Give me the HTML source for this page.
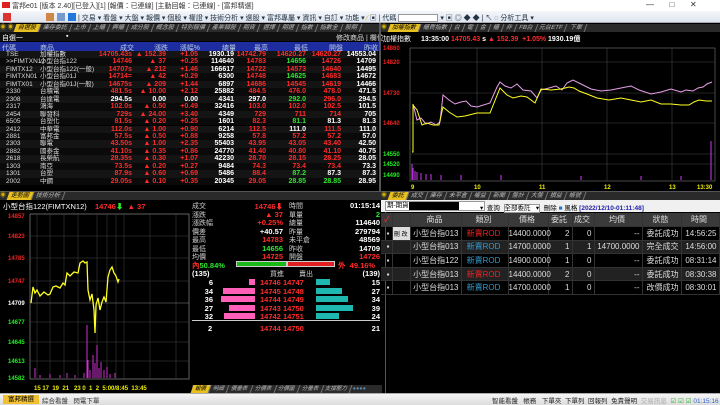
<!DOCTYPE html>
<html><head><meta charset="utf-8"><style>
*{margin:0;padding:0;box-sizing:border-box}
body{width:720px;height:405px;background:#000;overflow:hidden;position:relative;font-family:"Liberation Sans","Noto Sans CJK TC",sans-serif;font-size:7px;color:#fff}
.a{position:absolute;white-space:nowrap}
.r{color:#ff2a2a}.g{color:#2fe62f}.w{color:#fff}.y{color:#ffe800}
.tabs{background:#2a2a2a;height:8px;font-size:6px;color:#bbb;line-height:8px}
.tab{display:inline-block;padding:0 3px;border-right:1px solid #777;transform:skewX(-20deg)}
.tab.on{background:#e8c020;color:#000}
.row{position:absolute;left:0;width:378px;height:7.45px;line-height:7.45px;font-weight:bold;font-size:7px}
.row span{position:absolute;text-align:right}
.c0{left:6px;text-align:left!important;font-weight:normal;color:#ddd}
.c1{left:40px;text-align:left!important;font-weight:normal;color:#ddd}
.c2{right:246px}.c3{right:212px}.c4{right:180px}.c5{right:144px}.c6{right:112px}.c7{right:72px}.c8{right:37px}.c9{right:2px}
.ot td{border-right:1px solid #333;border-bottom:1px solid #333;height:13.6px;font-size:8px;color:#ddd;text-align:right;padding-right:2px}
</style></head><body>
<!-- title -->
<div class="a" style="left:0;top:0;width:720px;height:11px;background:#fff"></div>
<div class="a" style="left:2px;top:2px;width:8px;height:6px;background:#d22"></div>
<div class="a" style="left:12px;top:1px;color:#333;font-size:7px">富邦e01 [版本 2.40][已登入][1] [報價：已連線] [主動回報：已連線] - [富邦精選]</div>
<div class="a" style="left:646px;top:0;color:#333;font-size:8px">—&nbsp;&nbsp;&nbsp;&nbsp;&nbsp;&nbsp;&nbsp;□&nbsp;&nbsp;&nbsp;&nbsp;&nbsp;&nbsp;&nbsp;✕</div>
<div class="a" style="left:0;top:11px;width:720px;height:12px;background:linear-gradient(#f4f6fa,#dfe5ee);border-bottom:1px solid #aab"></div>
<div class="a" style="left:3px;top:13px;width:8px;height:8px;background:#d33"></div>
<div class="a" style="left:46px;top:13px;width:8px;height:8px;background:#cc8844"></div>
<div class="a" style="left:57px;top:13px;width:8px;height:8px;background:#7799cc"></div>
<div class="a" style="left:68px;top:13px;width:8px;height:8px;background:#2277dd"></div>
<div class="a" style="left:78px;top:13px;color:#234;font-size:7px">| 交易 ▾ 看盤 ▾ 大盤 ▾ 報價 ▾ 個股 ▾ 權證 ▾ 技術分析 ▾ 選股 ▾ 富邦專屬 ▾ 資訊 ▾ 自訂 ▾ 功能 ▾ <span style="color:#ca0">⁄</span> ▣ | 代碼 <span style="display:inline-block;width:40px;height:8px;background:#fff;border:1px solid #999;vertical-align:middle"></span> ▾ ▣ ◎ ◆ ◆ | ↖ ◌ 分析工具 ▾</div>
<!-- top-left panel -->
<div class="a tabs" style="left:0;top:24px;width:380px"><span style="color:#ca0">◉ ◉</span> <span class="tab on">自選股</span><span class="tab">庫存委託</span><span class="tab">上市</span><span class="tab">上櫃</span><span class="tab">興櫃</span><span class="tab">成分股</span><span class="tab">概念股</span><span class="tab">特別報價</span><span class="tab">產業類股</span><span class="tab">期貨</span><span class="tab">選擇</span><span class="tab">期選</span><span class="tab">指數</span><span class="tab">指數全</span><span class="tab">股期</span></div>
<div class="a" style="left:0;top:32px;width:380px;height:9px;background:#111"></div>
<div class="a" style="left:2px;top:33px;font-size:7px">自選一</div><div class="a" style="left:66px;top:33px">▪</div>
<div class="a" style="left:336px;top:33px;font-size:7px;color:#ddd">修改商品 | 欄位</div>
<div class="a" style="left:0;top:42px;width:380px;height:9px;background:#1d2c9e"></div>
<div class="a" style="left:0;top:43px;width:380px;color:#bcd;font-size:7px">
<span class="a" style="left:2px">代碼</span><span class="a" style="left:40px">商品</span><span class="a" style="right:246px">成交</span><span class="a" style="right:212px">漲跌</span><span class="a" style="right:180px">漲幅%</span><span class="a" style="right:144px">總量</span><span class="a" style="right:112px">最高</span><span class="a" style="right:72px">最低</span><span class="a" style="right:37px">開盤</span><span class="a" style="right:2px">昨收</span></div>
<div id="tbl"></div>
<!-- vertical divider -->
<div class="a" style="left:379px;top:23px;width:2px;height:172px;background:#555"></div>
<!-- top-right chart -->
<div class="a tabs" style="left:381px;top:24px;width:339px"><span style="color:#ca0">◉</span> <span class="tab on">加權指數</span><span class="tab">櫃買指數</span><span class="tab">台</span><span class="tab">電</span><span class="tab">金</span><span class="tab">櫃</span><span class="tab">非</span><span class="tab">FB台</span><span class="tab">元台ETF</span><span class="tab">下單</span></div>
<div class="a" style="left:383px;top:34px;font-size:7px">加權指數</div>
<div class="a" style="left:421px;top:34px;font-size:7px;font-weight:bold">13:35:00 <span class="r">14705.43</span> s <span class="r">▲ 152.39&nbsp; +1.05%</span> 1930.19億</div>
<svg class="a" style="left:381px;top:44px" width="339" height="151">
<g stroke="#444" stroke-width="0.6" fill="none">
<rect x="29" y="4" width="305" height="133" stroke="#777"/>
<line x1="96" y1="4" x2="96" y2="137"/><line x1="161" y1="4" x2="161" y2="137"/><line x1="226" y1="4" x2="226" y2="137"/><line x1="291" y1="4" x2="291" y2="137"/>
<line x1="29" y1="18" x2="334" y2="18"/><line x1="29" y1="49" x2="334" y2="49"/><line x1="29" y1="79" x2="334" y2="79"/><line x1="29" y1="110" x2="334" y2="110"/><line x1="29" y1="120" x2="334" y2="120"/>
</g>
<g font-size="6" font-weight="bold" font-family="Liberation Sans">
<text x="2" y="6" fill="#e22">14860</text><text x="2" y="20" fill="#e22">14820</text><text x="2" y="51" fill="#e22">14730</text><text x="2" y="81" fill="#e22">14640</text>
<text x="2" y="112" fill="#2e2">14550</text><text x="2" y="122" fill="#2e2">14520</text><text x="2" y="133" fill="#2e2">14490</text>
<text x="30" y="145" fill="#ee0">9</text><text x="93" y="145" fill="#ee0">10</text><text x="158" y="145" fill="#ee0">11</text><text x="223" y="145" fill="#ee0">12</text><text x="288" y="145" fill="#ee0">13</text><text x="316" y="145" fill="#ee0">13:30</text></g>
<path d="M31 120V136M32 124V136M34 127V136M36 128V136M40 129V136M45 130V136M50 130V136M60 131V136M80 131V136M120 131V136M200 132V136M260 132V136M300 132V136M330 97V136" stroke="#b030d0" stroke-width="1.2"/>
<polyline fill="none" stroke="#e8a0e8" stroke-width="1" points="32,60 36,76 40,74 45,80 50,78 55,81 59,78 62,51 68,56 74,60 80,58 85,57 90,62 96,63 109,59 116,43 119,38 124,42 130,44 136,40 142,46 150,47 156,54 160,46 168,44 175,42 181,46 186,39 192,36 200,40 210,45 220,47 230,46 240,44 250,42 258,46 270,50 280,48 290,45 300,48 305,46 312,47 317,44 322,43 326,40 331,38"/>
<polyline fill="none" stroke="#ffff20" stroke-width="1" points="31,108 32,108 32,61 36,66 41,81 46,79 52,81 58,81 62,63 68,68 76,73 84,72 96,69 109,69 119,44 126,51 132,54 140,52 146,53 154,59 160,45 170,46 180,45 188,43 193,44 198,47 206,50 216,54 228,56 240,54 250,56 260,58 270,56 280,60 290,60 300,61 308,61 313,58 318,56 325,57 331,57"/>
</svg>
<div class="a" style="left:0;top:191px;width:720px;height:1px;background:#555"></div>
<!-- bottom-left -->
<div class="a tabs" style="left:0;top:192px;width:385px"><span style="color:#ca0">◉</span> <span class="tab on">走勢圖</span><span class="tab">技術分析</span></div>
<div class="a" style="left:3px;top:201px;font-size:7.5px">小型台指122(FIMTXN12)</div>
<div class="a r" style="left:95px;top:201px;font-size:7.5px;font-weight:bold">14746<span class="g">⬇</span> &nbsp;▲ 37</div>
<svg class="a" style="left:0;top:210px" width="192" height="183">
<rect x="30" y="4" width="159" height="165" stroke="#888" stroke-width="0.7" fill="none"/>
<g stroke="#444" stroke-width="0.5"><line x1="37" y1="4" x2="37" y2="169"/><line x1="50" y1="4" x2="50" y2="169"/><line x1="64" y1="4" x2="64" y2="169"/><line x1="78" y1="4" x2="78" y2="169"/><line x1="97" y1="4" x2="97" y2="169"/><line x1="107" y1="4" x2="107" y2="169"/><line x1="116" y1="4" x2="116" y2="169"/><line x1="124" y1="4" x2="124" y2="169"/><line x1="150" y1="4" x2="150" y2="169"/><line x1="176" y1="4" x2="176" y2="169"/>
<line x1="30" y1="26" x2="189" y2="26"/><line x1="30" y1="48" x2="189" y2="48"/><line x1="30" y1="71" x2="189" y2="71"/><line x1="30" y1="93" x2="189" y2="93" stroke="#888"/><line x1="30" y1="112" x2="189" y2="112"/><line x1="30" y1="132" x2="189" y2="132"/><line x1="30" y1="151" x2="189" y2="151"/></g>
<g font-size="6" font-weight="bold" font-family="Liberation Sans">
<text x="8" y="8" fill="#e22">14857</text><text x="8" y="28" fill="#e22">14823</text><text x="8" y="50" fill="#e22">14785</text><text x="8" y="73" fill="#e22">14747</text><text x="8" y="95" fill="#fff">14709</text><text x="8" y="114" fill="#2e2">14677</text><text x="8" y="134" fill="#2e2">14645</text><text x="8" y="153" fill="#2e2">14613</text><text x="8" y="170" fill="#2e2">14582</text>
<text x="34" y="180" fill="#ee0">15 17 &nbsp;19 &nbsp;21 &nbsp; 23 0 &nbsp;1 &nbsp;2 &nbsp;5:00/8:45 &nbsp;13:45</text></g>
<path d="M35 158V168M40 165V168M50 164V168M60 165V168M67 163V168M75 165V168M84 163V168M87 115V168M88 150V168M90 160V168M93 145V168M95 153V168M97 135V168M99 158V168M101 152V168M104 160V168M107 157V168M110 164V168M115 163V168" stroke="#d030d0" stroke-width="1"/>
<polyline fill="none" stroke="#ffff20" stroke-width="1.3" points="31,93 33,77 35,83 37,80 40,86 44,82 48,85 50,84 53,77 56,76 60,78 63,73 65,75 67,63 70,66 74,62 78,63 80,53 83,51 85,53 87,52 88,80 90,90 92,84 94,100 95,123 96,95 98,88 100,100 102,92 104,87 106,92 108,67 110,60 112,57 114,63 116,66 118,72 119,69"/>
</svg>
<!-- quote -->
<div id="q"></div>
<div class="a" style="left:236px;top:261px;width:51px;height:6px;background:#18b818;border:1px solid #ccc"></div>
<div class="a" style="left:287px;top:261px;width:48px;height:6px;background:#e02020;border:1px solid #ccc"></div>
<div class="a g" style="left:192px;top:260px;font-size:7.5px;font-weight:bold"><span class="r">內</span>50.84%</div>
<div class="a r" style="left:338px;top:260px;font-size:7.5px;font-weight:bold">外 &nbsp;49.16%</div>
<div class="a" style="left:192px;top:320px;width:188px;height:1px;background:#ccc"></div>
<!-- bottom tabs -->
<div class="a tabs" style="left:192px;top:385px;width:190px;font-size:5.5px"><span class="tab on">報價</span><span class="tab">明細</span><span class="tab">價量表</span><span class="tab">分價表</span><span class="tab">分價圖</span><span class="tab">分量表</span><span class="tab">支撐壓力</span> <span style="color:#58a">●●●●</span></div>
<div class="a" style="left:385px;top:192px;width:1px;height:201px;background:#555"></div>
<!-- bottom-right -->
<div class="a tabs" style="left:381px;top:192px;width:339px"><span style="color:#ca0">◉</span> <span class="tab on">委託</span><span class="tab">成交</span><span class="tab">庫存</span><span class="tab">未平倉</span><span class="tab">權益</span><span class="tab">新聞</span><span class="tab">盤計</span><span class="tab">大盤</span><span class="tab">損益</span><span class="tab">帳號</span></div>
<div class="a" style="left:381px;top:200px;width:339px;height:12px;background:#f0f0f0"></div>
<div class="a" style="left:385px;top:201px;width:100px;height:10px;background:#fff;border:1px solid #999;color:#000;font-size:6.5px;line-height:8px;padding-left:1px">期-期貨<span style="display:inline-block;width:50px;height:8px;background:#000;vertical-align:top"></span></div>
<div class="a" style="left:480px;top:202px;color:#000;font-size:6.5px">▾ &nbsp;查詢 &nbsp;<span style="background:#fff;border:1px solid #999">全部委託 &nbsp; ▾</span> &nbsp;刪除 <span style="color:#27c">■</span> 風格 <b style="color:#22a">[2022/12/10-01:11:48]</b></div>
<div class="a" style="left:381px;top:213px;width:339px;height:13px;background:#3a3a3a"></div>
<table class="a ot" style="left:381px;top:213px;width:338px;border-collapse:collapse;table-layout:fixed">
<colgroup><col style="width:11px"><col style="width:18px"><col style="width:51px"><col style="width:47px"><col style="width:40px"><col style="width:24px"><col style="width:22px"><col style="width:48px"><col style="width:39px"><col style="width:38px"></colgroup>
<tr style="background:#3a3a3a;color:#ccc"><td style="color:#e33">✓</td><td></td><td style="text-align:center">商品</td><td style="text-align:center">類別</td><td style="text-align:center">價格</td><td style="text-align:center">委託</td><td style="text-align:center">成交</td><td style="text-align:center">均價</td><td style="text-align:center">狀態</td><td style="text-align:center">時間</td></tr>
<tr><td>▪</td><td style="background:#ddd;color:#000;font-size:6px">刪 改</td><td>小型台指013</td><td style="text-align:center;color:#e22">新賣ROD</td><td>14400.0000</td><td>2</td><td>0</td><td>--</td><td>委託成功</td><td>14:56:25</td></tr>
<tr style="background:#222"><td>▪</td><td></td><td>小型台指013</td><td style="text-align:center;color:#39c">新賣ROD</td><td>14700.0000</td><td>1</td><td>1</td><td>14700.0000</td><td>完全成交</td><td>14:56:00</td></tr>
<tr><td>▪</td><td></td><td>小型台指122</td><td style="text-align:center;color:#39c">新賣ROD</td><td>14900.0000</td><td>1</td><td>0</td><td>--</td><td>委託成功</td><td>08:31:14</td></tr>
<tr style="background:#222"><td>▪</td><td></td><td>小型台指013</td><td style="text-align:center;color:#e22">新賣ROD</td><td>14400.0000</td><td>2</td><td>0</td><td>--</td><td>委託成功</td><td>08:30:38</td></tr>
<tr><td>▪</td><td></td><td>小型台指013</td><td style="text-align:center;color:#39c">新賣ROD</td><td>14700.0000</td><td>1</td><td>0</td><td>--</td><td>改價成功</td><td>08:30:01</td></tr>
</table>
<!-- status -->
<div class="a" style="left:0;top:393px;width:720px;height:12px;background:linear-gradient(#f5f5f5,#dcdcdc);border-top:1px solid #aaa"></div>
<div class="a" style="left:3px;top:395px;width:36px;height:9px;background:#f0c030;color:#000;font-size:6.5px;text-align:center;line-height:9px">富邦精選</div>
<div class="a" style="left:42px;top:395px;color:#333;font-size:6.5px">綜合看盤 &nbsp; 閃電下單</div>
<div class="a" style="left:492px;top:395px;color:#222;font-size:6.5px">智能看盤 &nbsp; 帳務 &nbsp; 下單夾 &nbsp;下單列 &nbsp;回報列 &nbsp;免責聲明 &nbsp;<span style="color:#aaa">交易訊息</span> &nbsp;<span style="color:#3a3">☑ ☑ ☑</span> <span style="color:#36c">01:15:16</span></div>
<script>
var R=[["TSE","加權指數","14705.43s","▲ 152.39","+1.05","1930.19","14742.79","14620.27","14620.27","14553.04","r","r","r","r"],
[">>FIMTXN12","小型台指122","14746","▲ 37","+0.25","114640","14783","14656","14726","14709","r","r","g","r"],
["FIMTX12","小型台指122(一般)","14707s","▲ 212","+1.46","166617","14722","14573","14640","14495","r","r","r","r"],
["FIMTXN01","小型台指01J","14714=","▲ 42","+0.29","6300","14748","14625","14683","14672","r","r","g","r"],
["FIMTX01","小型台指01J(一般)","14675s","▲ 209","+1.44","6897","14686","14545","14619","14466","r","r","r","r"],
["2330","台積電","481.5s","▲ 10.00","+2.12","25882","484.5","476.0","478.0","471.5","r","r","r","r"],
["2308","台達電","294.5s","0.00","0.00","4341","297.0","292.0","296.0","294.5","w","r","g","r"],
["2317","鴻海","102.0s","▲ 0.50","+0.49","32416","103.0","102.0","102.5","101.5","r","r","r","r"],
["2454","聯發科","729s","▲ 24.00","+3.40","4349","729","711","714","705","r","r","r","r"],
["6505","台塑化","81.5s","▲ 0.20","+0.25","1601","82.3","81.1","81.3","81.3","r","r","g","w"],
["2412","中華電","112.0s","▲ 1.00","+0.90","6214","112.5","111.0","111.5","111.0","r","r","w","r"],
["2881","富邦金","57.5s","▲ 0.50","+0.88","9258","57.8","57.2","57.2","57.0","r","r","r","r"],
["2303","聯電","43.50s","▲ 1.00","+2.35","55403","43.95","43.05","43.40","42.50","r","r","r","r"],
["2882","國泰金","41.10s","▲ 0.35","+0.86","24770","41.40","40.80","41.10","40.75","r","r","r","r"],
["2618","長榮航","28.35s","▲ 0.30","+1.07","42230","28.70","28.15","28.25","28.05","r","r","r","r"],
["1303","南亞","73.5s","▲ 0.20","+0.27","9484","74.3","73.4","73.4","73.3","r","r","r","r"],
["1301","台塑","87.9s","▲ 0.60","+0.69","5486","88.4","87.2","87.3","87.3","r","r","g","w"],
["2002","中鋼","29.05s","▲ 0.10","+0.35","20345","29.05","28.85","28.85","28.95","r","r","g","g"]];
var h="";R.forEach(function(r,i){var c2=r[2]=="294.5s"?"w":"r";var c3=r[3]=="0.00"?"w":"r";
h+='<div class="row" style="top:'+(51+i*7.45)+'px;background:'+(i%2?'#0a0a0a':'#141414')+'"><span class="c0" style="font-size:6.5px">'+r[0]+'</span><span class="c1" style="font-size:6.5px">'+r[1]+'</span><span class="c2 '+c2+'">'+r[2]+'</span><span class="c3 '+c3+'">'+r[3]+'</span><span class="c4 '+c3+'">'+r[4]+'</span><span class="c5 w">'+r[5]+'</span><span class="c6 '+r[10]+'">'+r[6]+'</span><span class="c7 '+r[12]+'">'+r[7]+'</span><span class="c8 '+r[13]+'">'+r[8]+'</span><span class="c9 w">'+r[9]+'</span></div>';});
document.getElementById("tbl").innerHTML=h;
var Q=[["成交","14746⬇","r","時間","01:15:14","w"],["漲跌","▲ 37","r","單量","2","g"],["漲跌幅","+0.25%","r","總量","114640","w"],["價差","+40.57","w","昨量","279794","w"],["最高","14783","r","未平倉","48569","w"],["最低","14656","g","昨收","14709","w"],["均價","14725","r","開盤","14726","r"]];
var s="";Q.forEach(function(q,i){var t=201+i*8.5;s+='<div class="a" style="left:192px;top:'+t+'px;color:#ccc;font-size:7px">'+q[0]+'</div><div class="a '+q[2]+'" style="right:437px;top:'+t+'px;font-size:7.5px;font-weight:bold">'+q[1]+'</div><div class="a" style="left:289px;top:'+t+'px;color:#ccc;font-size:7px">'+q[3]+'</div><div class="a '+q[5]+'" style="right:340px;top:'+t+'px;font-size:7.5px;font-weight:bold">'+q[4]+'</div>';});
s+='<div class="a" style="left:192px;top:269px;font-size:7.5px;font-weight:bold">(135)</div><div class="a" style="left:270px;top:269px;color:#ccc">買進</div><div class="a" style="left:299px;top:269px;color:#ccc">賣出</div><div class="a" style="right:340px;top:269px;font-size:7.5px;font-weight:bold">(139)</div>';
var B=[["6",6,"14746","14747",14,"15"],["34",32,"14745","14748",26,"27"],["36",34,"14744","14749",32,"34"],["27",26,"14743","14750",37,"39"],["32",31,"14742","14751",23,"24"]];
B.forEach(function(b,i){var t=278+i*8.5;s+='<div class="a" style="right:507px;top:'+t+'px;font-size:7.5px;font-weight:bold">'+b[0]+'</div><div class="a" style="left:'+(255-b[1])+'px;top:'+(t+1)+'px;width:'+b[1]+'px;height:6px;background:#ff5fb8"></div><div class="a r" style="left:260px;top:'+t+'px;font-size:7.5px;font-weight:bold">'+b[2]+' '+b[3]+'</div><div class="a" style="left:316px;top:'+(t+1)+'px;width:'+b[4]+'px;height:6px;background:#1fb8b0"></div><div class="a" style="right:340px;top:'+t+'px;font-size:7.5px;font-weight:bold">'+b[5]+'</div>';});
s+='<div class="a" style="left:208px;top:324px;font-size:7.5px;font-weight:bold">2</div><div class="a r" style="left:260px;top:324px;font-size:7.5px;font-weight:bold">14744 14750</div><div class="a" style="right:340px;top:324px;font-size:7.5px;font-weight:bold">21</div>';
document.getElementById("q").innerHTML=s;
</script>
</body></html>
